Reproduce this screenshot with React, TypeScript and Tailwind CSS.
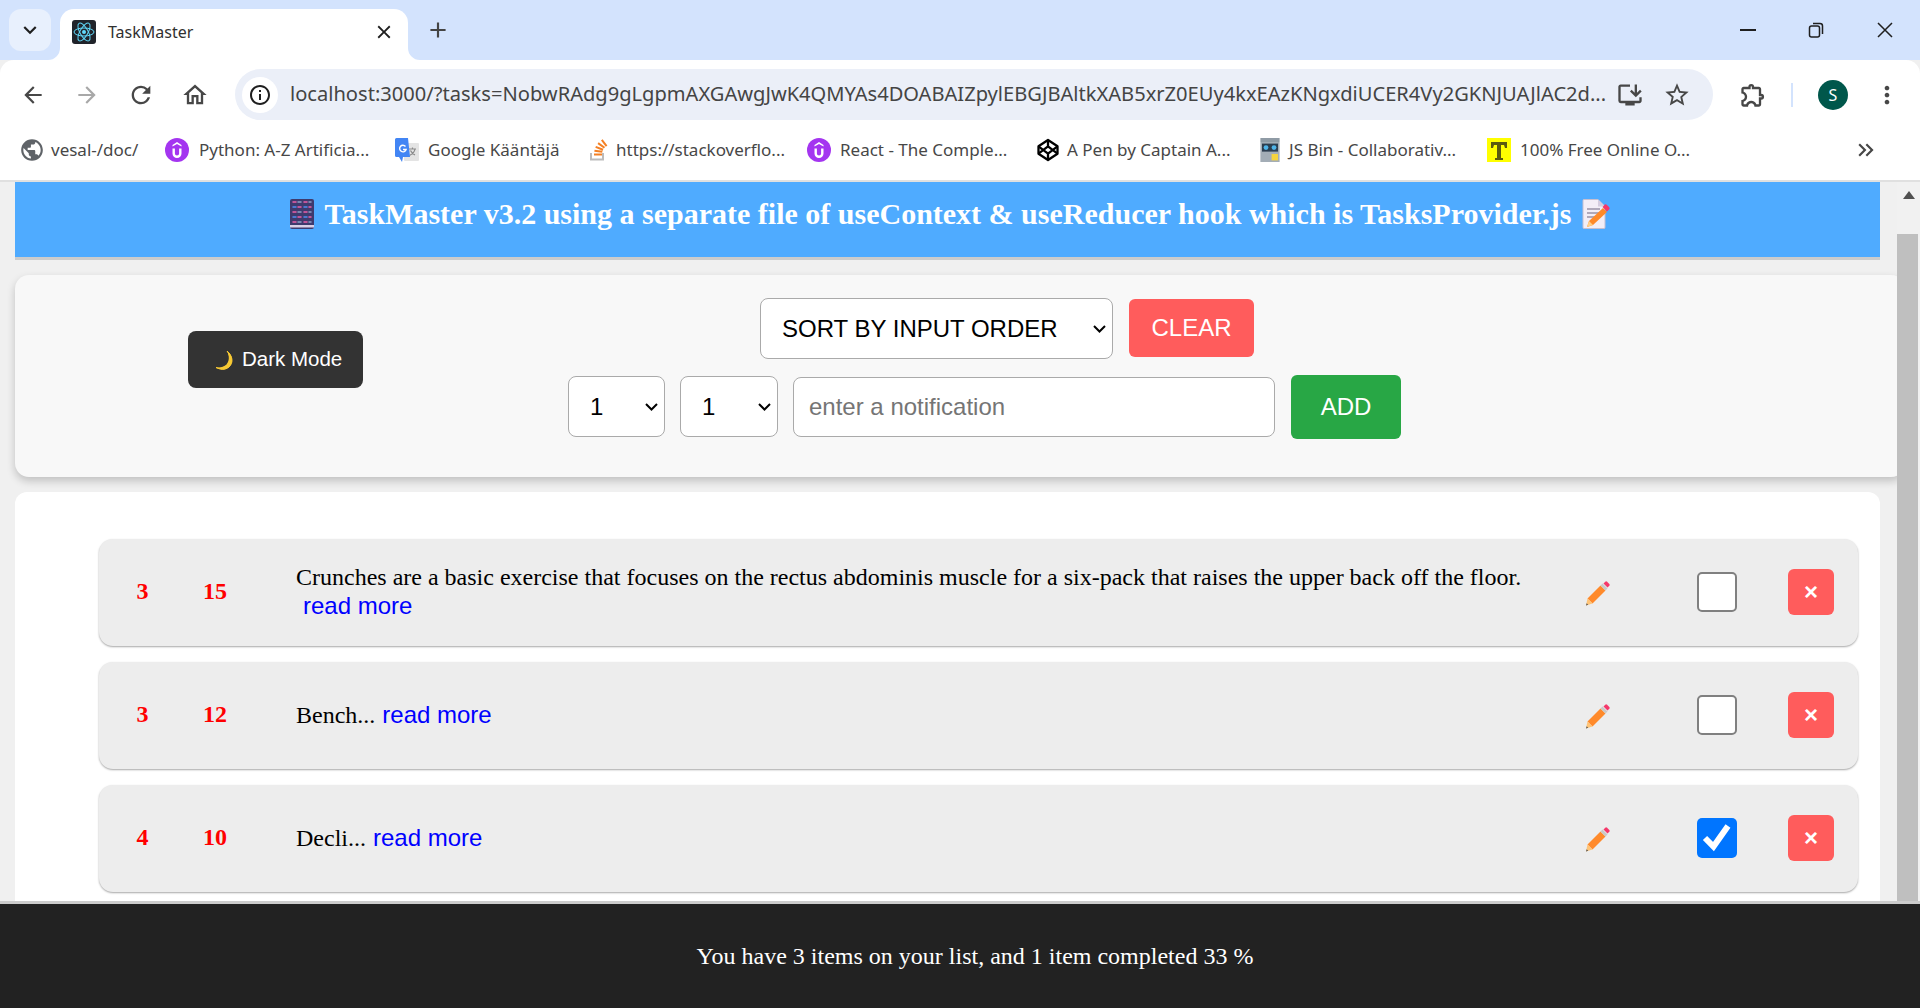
import React from "react";
import { MdArrowBack, MdArrowForward, MdRefresh, MdOutlineHome, MdInfoOutline, MdStarBorder, MdOutlineExtension, MdMoreVert, MdKeyboardArrowDown, MdClose, MdAdd, MdOutlineInstallDesktop, MdKeyboardDoubleArrowRight, MdPublic } from "react-icons/md";

const ReactFav = () => (
  <svg viewBox="0 0 24 24" className="w-6 h-6 shrink-0">
    <rect width="24" height="24" rx="3" fill="#20232a" />
    <circle cx="12" cy="12" r="2" fill="#61dafb" />
    <g fill="none" stroke="#61dafb" strokeWidth="1">
      <ellipse cx="12" cy="12" rx="10" ry="4" />
      <ellipse cx="12" cy="12" rx="10" ry="4" transform="rotate(60 12 12)" />
      <ellipse cx="12" cy="12" rx="10" ry="4" transform="rotate(120 12 12)" />
    </g>
  </svg>
);

const Udemy = () => (
  <svg viewBox="0 0 24 24" className="w-6 h-6 shrink-0">
    <circle cx="12" cy="12" r="12" fill="#a435f0" />
    <path d="M7.500 10.500v5a4.500 4.500 0 0 0 9 0v-5h-2.400v5a2.100 2.100 0 0 1-4.200 0v-5z" fill="#fff" />
    <path d="M12 4l4.500 3v1.600L12 5.900 7.500 8.600V7z" fill="#fff" />
  </svg>
);

const GTranslate = () => (
  <svg viewBox="0 0 24 24" className="w-6 h-6 shrink-0">
    <rect x="9" y="5" width="15" height="18" rx="1" fill="#e4e4e4" />
    <path d="M14 11h7M17.500 9.500v1.500M20 11c-.5 3-2.500 5-5.500 6.500M15.500 12.500c1 2 2.500 3.500 4.500 4.500" stroke="#8a8a8a" strokeWidth="1.200" fill="none" />
    <path d="M1.500 0H13l2 19H8l-1 5-3-5H1.500A1.500 1.500 0 0 1 0 17.500V1.500A1.500 1.500 0 0 1 1.500 0z" fill="#4285f4" />
    <path d="M10.500 8.500a3.300 3.300 0 1 0 .6 3H8" stroke="#fff" strokeWidth="1.400" fill="none" />
  </svg>
);

const StackIcon = () => (
  <svg viewBox="0 0 24 24" className="w-6 h-6 shrink-0">
    <path d="M4 15v7.500h14V15h-2v5.500H6V15z" fill="#bcbbbb" />
    <path d="M8 17.500h8v-2H8zM8.300 13.700l7.900 1.100.3-2-7.900-1.100zM9.300 9.800l7.400 2.900.7-1.900-7.400-2.900zM11.500 5.900l6.400 4.700 1.200-1.600-6.400-4.700zM15 2.500l4.800 6.300 1.600-1.200L16.600 1.300z" fill="#f48024" />
  </svg>
);

const CodepenIcon = () => (
  <svg viewBox="0 0 24 24" className="w-[24px] h-[24px] shrink-0" fill="none" stroke="#000" strokeWidth="2.300" strokeLinejoin="round">
    <path d="M12 2l9.500 6.300v7.400L12 22l-9.500-6.300V8.300z" />
    <path d="M12 2v6.300M12 15.700V22M2.500 8.300L12 15.700l9.500-7.400M2.500 15.700L12 8.300l9.500 7.400" />
  </svg>
);

const JsBin = () => (
  <svg viewBox="0 0 24 30" className="w-[20px] h-[24px] shrink-0">
    <rect width="24" height="5" fill="#8f9ba5" />
    <rect y="5" width="24" height="25" fill="#a3adb6" />
    <rect x="2" y="7" width="20" height="10" fill="#2c3e50" />
    <circle cx="7" cy="12" r="3" fill="#4fb4e8" />
    <circle cx="17" cy="12" r="3" fill="#4fb4e8" />
    <rect x="14" y="20" width="8" height="8" fill="#f5d33d" />
  </svg>
);

const TFav = () => (
  <svg viewBox="0 0 24 24" className="w-6 h-6 shrink-0">
    <rect width="24" height="24" fill="#ffff00" />
    <path d="M4 4h16v6h-2l-1-3h-3v13h2v2H8v-2h2V7H7L6 10H4z" fill="#5a5a10" />
  </svg>
);

const Restore = () => (
  <svg viewBox="0 0 16 16" className="w-4 h-4" fill="none" stroke="#1f1f1f" strokeWidth="1.500">
    <rect x="1.500" y="4" width="10" height="11" rx="2" />
    <path d="M5 1.500h7a2.500 2.500 0 0 1 2.500 2.500v8" />
  </svg>
);

const WinClose = () => (
  <svg viewBox="0 0 16 16" className="w-4 h-4" fill="none" stroke="#1f1f1f" strokeWidth="1.500">
    <path d="M1 1l14 14M15 1L1 15" />
  </svg>
);

const BookEmoji = () => (
  <svg viewBox="0 0 24 30" className="w-6 h-[30px] shrink-0">
    <rect width="24" height="30" rx="2" fill="#3e3a6e" />
    <rect x="0" y="26" width="24" height="2.500" fill="#d9cfe6" />
    {[3, 8, 13, 18, 23].map((y, i) => (
      <g key={y} strokeWidth="1.500" strokeLinecap="round">
        <path d={`M3 ${y}h3M14 ${y}h3`} stroke={i % 2 ? "#4f8ff0" : "#ec5fa8"} />
        <path d={`M8 ${y}h3M19 ${y}h2`} stroke={i % 2 ? "#ec5fa8" : "#8fa0c8"} />
      </g>
    ))}
  </svg>
);

const MemoEmoji = () => (
  <svg viewBox="0 0 28 30" className="w-7 h-[30px] shrink-0">
    <path d="M1 1.500A1 1 0 0 1 2 .5h14l7 7v21a1 1 0 0 1-1 1H2a1 1 0 0 1-1-1z" fill="#f3eef7" stroke="#c7bfd0" />
    <path d="M16 .5l7 7h-7z" fill="#d5cde0" />
    <path d="M5 10h13M5 14h13M5 18h8" stroke="#9a93a8" strokeWidth="1.500" />
    <path d="M21 9l4 4-14 13-6 2 2-6z" fill="#ff8a2b" />
    <path d="M5 28l2-6 4 4z" fill="#ffd08a" />
    <path d="M22 6.500a2 2 0 0 1 3-.5l2 2a2 2 0 0 1-.5 3l-1.500 1.500-4.500-4.500z" fill="#f5386a" />
  </svg>
);

const Moon = () => (
  <svg viewBox="0 0 20 24" className="w-[20px] h-6 shrink-0">
    <path d="M13 3c3 4 4 9 1 13-2.500 3.500-7 5-12 3.500 4 2 9 3 13-.5 4.500-4 4-11-2-16z" fill="#f7c934" stroke="#f7c934" />
    <path d="M13 3c2.500 5 2.500 10-.5 13.500C10 19 6 20 2 19.500c5 3 10.500 2.500 14-1.500 3.500-4.500 2.500-11-3-15z" fill="#f7c934" />
  </svg>
);

const Pencil = () => (
  <svg viewBox="0 0 26 26" className="w-[26px] h-[26px]">
    <path d="M2.500 18.500L15.500 5.500l5 5L7.500 23.500z" fill="#ff8a2b" />
    <path d="M2.500 18.500l5 5L1 25.500z" fill="#ffc477" />
    <path d="M1 25.500l.7-2.200 1.500 1.500z" fill="#555" />
    <path d="M15.500 5.500l2-2 5 5-2 2z" fill="#c9c9c9" />
    <path d="M18.500 3.500l1.800-1.800a1.300 1.300 0 0 1 1.800 0l2.200 2.200a1.300 1.300 0 0 1 0 1.800L22.500 7.500z" fill="#f5386a" />
  </svg>
);

const Chevron = () => (
  <svg viewBox="0 0 13 8" className="absolute right-[7px] top-1/2 -translate-y-1/2 w-[13px] h-[8px] pointer-events-none" fill="none" stroke="#000" strokeWidth="2">
    <path d="M1 1l5.500 5.500L12 1" />
  </svg>
);

const bookmarks: { icon: React.ReactNode; text: string; w: number; gap: number }[] = [
  { icon: <MdPublic className="w-[26px] h-[26px] text-[#5f6368] shrink-0" />, text: "vesal-/doc/", w: 146, gap: 6 },
  { icon: <Udemy />, text: "Python: A-Z Artificia...", w: 230, gap: 10 },
  { icon: <GTranslate />, text: "Google Kääntäjä", w: 191, gap: 9 },
  { icon: <StackIcon />, text: "https://stackoverflo...", w: 221, gap: 6 },
  { icon: <Udemy />, text: "React - The Comple...", w: 229, gap: 9 },
  { icon: <CodepenIcon />, text: "A Pen by Captain A...", w: 224, gap: 7 },
  { icon: <JsBin />, text: "JS Bin - Collaborativ...", w: 227, gap: 9 },
  { icon: <TFav />, text: "100% Free Online O...", w: 340, gap: 9 },
];

const tasks = [
  { a: 3, b: 15, text: "Crunches are a basic exercise that focuses on the rectus abdominis muscle for a six-pack that raises the upper back off the floor.", done: false },
  { a: 3, b: 12, text: "Bench...", done: false },
  { a: 4, b: 10, text: "Decli...", done: true },
];

const chromeFont = "font-['Noto_Sans','Open_Sans',sans-serif]";
const field = "appearance-none h-[61px] pl-[21px] bg-white border border-[#aaaaaa] rounded-[8px] text-[24px] text-black";

export default function App() {
  return (
    <div className="w-[1920px] h-[1008px] overflow-hidden flex flex-col bg-[#f0f0f0] font-['Liberation_Serif',serif]">
      {/* tab strip */}
      <div className={`h-[60px] shrink-0 bg-[#d3e3fd] flex ${chromeFont}`}>
        <div className="ml-[9px] mt-[9px] w-[42px] h-[42px] rounded-[12px] bg-[#e8f0fd] flex items-center justify-center">
          <MdKeyboardArrowDown className="w-[26px] h-[26px] text-[#1f1f1f]" />
        </div>
        <div className="relative ml-[9px] mt-[9px] w-[348px] h-[51px] bg-white rounded-t-[14px] flex items-center pl-3 pb-[6px]">
          <svg viewBox="0 0 12 12" className="absolute left-[-12px] bottom-0 w-3 h-3"><path d="M12 0v12H0a12 12 0 0 0 12-12z" fill="#fff" /></svg>
          <svg viewBox="0 0 12 12" className="absolute right-[-12px] bottom-0 w-3 h-3"><path d="M0 0v12h12A12 12 0 0 1 0 0z" fill="#fff" /></svg>
          <ReactFav />
          <span className="ml-3 text-[16px] text-[#303030]">TaskMaster</span>
          <MdClose className="ml-auto mr-[13px] w-[22px] h-[22px] text-[#1f1f1f]" />
        </div>
        <MdAdd className="ml-[17px] mt-[17px] w-[26px] h-[26px] text-[#444]" />
        <div className="ml-auto flex items-start pt-[18px] pr-[27px]">
          <div className="w-[16px] h-[2px] bg-[#1f1f1f] mt-[11px]" />
          <div className="ml-[52px] mt-[4px]"><Restore /></div>
          <div className="ml-[53px] mt-[4px]"><WinClose /></div>
        </div>
      </div>
      {/* toolbar */}
      <div className={`h-[60px] shrink-0 pt-[9px] bg-white rounded-t-[14px] flex items-center relative z-10 ${chromeFont}`}>
        <MdArrowBack className="ml-[20px] w-[26px] h-[26px] text-[#474747]" />
        <MdArrowForward className="ml-[28px] w-[26px] h-[26px] text-[#a8a8a8]" />
        <MdRefresh className="ml-[27px] w-[28px] h-[28px] text-[#474747]" />
        <MdOutlineHome className="ml-[26px] w-[28px] h-[28px] text-[#474747]" />
        <div className="ml-[26px] w-[1478px] h-[51px] rounded-full bg-[#ebeff8] flex items-center">
          <div className="ml-[7px] w-9 h-9 rounded-full bg-white flex items-center justify-center shrink-0">
            <MdInfoOutline className="w-[24px] h-[24px] text-[#1f1f1f]" />
          </div>
          <span className="ml-[12px] w-[1320px] shrink-0 text-[20.100px] text-[#444] whitespace-nowrap">localhost:3000/?tasks=NobwRAdg9gLgpmAXGAwgJwK4QMYAs4DOABAIZpylEBGJBAltkXAB5xrZ0EUy4kxEAzKNgxdiUCER4Vy2GKNJUAJlAC2d...</span>
          <MdOutlineInstallDesktop className="ml-[6px] w-[28px] h-[28px] text-[#474747] shrink-0" />
          <MdStarBorder className="ml-[19px] w-[28px] h-[28px] text-[#474747] shrink-0" />
        </div>
        <MdOutlineExtension className="ml-[26px] w-[28px] h-[28px] text-[#474747]" />
        <div className="ml-[24px] w-[2px] h-[24px] bg-[#d3e3fd]" />
        <div className="ml-[25px] w-[30px] h-[30px] rounded-full bg-[#00574b] text-white text-[16px] flex items-center justify-center">S</div>
        <MdMoreVert className="ml-[25px] w-[28px] h-[28px] text-[#474747]" />
      </div>
      {/* bookmarks */}
      <div className={`h-[62px] shrink-0 bg-white border-b-2 border-[#e0e0e0] flex items-center pl-[19px] pr-[41px] ${chromeFont}`}>
        {bookmarks.map((b) => (
          <div key={b.text} className="flex items-center shrink-0" style={{ width: b.w }}>
            {b.icon}
            <span className="text-[17px] text-[#474747] whitespace-nowrap" style={{ marginLeft: b.gap }}>{b.text}</span>
          </div>
        ))}
        <MdKeyboardDoubleArrowRight className="ml-auto w-[26px] h-[26px] text-[#474747]" />
      </div>
      {/* page */}
      <div className="flex-1 min-h-0 flex">
        <div className="w-[1897px] shrink-0 overflow-hidden pl-[15px]">
          <div className="w-[1865px] h-[78px] bg-[#4fabff] border-b-[3px] border-[#cccccc] text-white flex items-center justify-center gap-[10px] pb-[12px] pl-[5px]">
            <BookEmoji />
            <h1 className="text-[30px] font-bold whitespace-nowrap">TaskMaster v3.2 using a separate file of useContext &amp; useReducer hook which is TasksProvider.js</h1>
            <MemoEmoji />
          </div>
          <div className="mt-[15px] w-[1890px] h-[202px] bg-[#f8f8f8] rounded-[14px] shadow-[0_4px_8px_rgba(0,0,0,0.2)] flex items-start font-['Liberation_Sans',sans-serif]">
            <button className="ml-[173px] mt-[56px] w-[175px] h-[57px] rounded-[8px] bg-[#333333] text-white text-[20.500px] flex items-center justify-start pl-[26px] gap-[8px]">
              <Moon />
              Dark Mode
            </button>
            <div className="ml-[205px] flex flex-col">
              <div className="ml-[192px] mt-[23px] flex items-center">
                <div className="relative flex">
                  <select defaultValue="SORT BY INPUT ORDER" className={`w-[353px] ${field}`}>
                    <option>SORT BY INPUT ORDER</option>
                  </select>
                  <Chevron />
                </div>
                <button className="ml-[16px] mb-[1px] w-[125px] h-[58px] rounded-[6px] bg-[#ff5c5c] text-white text-[24px]">CLEAR</button>
              </div>
              <div className="mt-[16px] flex items-center">
                <div className="relative flex mb-[1px]">
                  <select className={`w-[97px] ${field}`}><option>1</option></select>
                  <Chevron />
                </div>
                <div className="relative flex mb-[1px] ml-[15px]">
                  <select className={`w-[98px] ${field}`}><option>1</option></select>
                  <Chevron />
                </div>
                <input placeholder="enter a notification" className="ml-[15px] w-[482px] h-[60px] px-[15px] bg-white border border-[#aaaaaa] rounded-[8px] text-[24px] placeholder:text-[#757575]" />
                <button className="ml-[16px] w-[110px] h-[64px] rounded-[6px] bg-[#28a745] text-white text-[24px]">ADD</button>
              </div>
            </div>
          </div>
          <div className="mt-[15px] w-[1865px] h-[460px] bg-white rounded-t-[12px] pl-[83px] pt-[47px] flex flex-col gap-[16px]">
            {tasks.map((t) => (
              <div key={t.text} className="ml-[1px] w-[1759px] h-[107px] shrink-0 bg-[#ededed] rounded-[14px] shadow-[0_1px_2px_rgba(0,0,0,0.35)] flex items-center">
                <div className="w-[87px] pb-[3px] text-center text-[24px] font-bold text-[#ff0000]">{t.a}</div>
                <div className="w-[58px] pb-[3px] text-center text-[24px] font-bold text-[#ff0000]">{t.b}</div>
                <div className="ml-[52px] w-[1260px] text-[24px] leading-[27.600px] text-black">
                  {t.text}
                  <a className="inline-block ml-[7px] font-['Liberation_Sans',sans-serif] text-[#0000ff]">read more</a>
                </div>
                <div className="ml-[29px] w-[26px] flex"><Pencil /></div>
                <div className="relative ml-[86px] mb-[1px] w-10 h-10 flex">
                  <input type="checkbox" readOnly checked={t.done} className={t.done ? "appearance-none w-10 h-10 rounded-[5px] bg-[#0075ff]" : "appearance-none w-10 h-10 rounded-[5px] bg-white border-[2.500px] border-[#808080]"} />
                  {t.done && (
                    <svg viewBox="0 0 40 40" className="absolute inset-0 w-10 h-10 pointer-events-none" fill="none" stroke="#fff" strokeWidth="6">
                      <path d="M8 20l8.500 8.500L31 8" />
                    </svg>
                  )}
                </div>
                <button className="ml-[51px] mb-[1px] w-[46px] h-[46px] rounded-[6px] bg-[#ff5c5c] text-white font-['Liberation_Sans',sans-serif] text-[24px] font-bold flex items-center justify-center">×</button>
              </div>
            ))}
          </div>
        </div>
        <div className="w-[23px] shrink-0 bg-[#f1f1f1] flex flex-col">
          <svg viewBox="0 0 14 8" className="mx-auto mt-[9px] w-[14px] h-[8px]"><path d="M7 0l6 8H1z" fill="#505050" /></svg>
          <div className="mt-[35px] w-[21px] flex-1 bg-[#bfbfbf]" />
        </div>
      </div>
      {/* footer */}
      <div className="h-[107px] shrink-0 border-t-[3px] border-[#cccccc] bg-[#222222] text-white text-[24px] flex items-center justify-center pl-[30px] z-10">
        You have 3 items on your list, and 1 item completed 33 %
      </div>
    </div>
  );
}
